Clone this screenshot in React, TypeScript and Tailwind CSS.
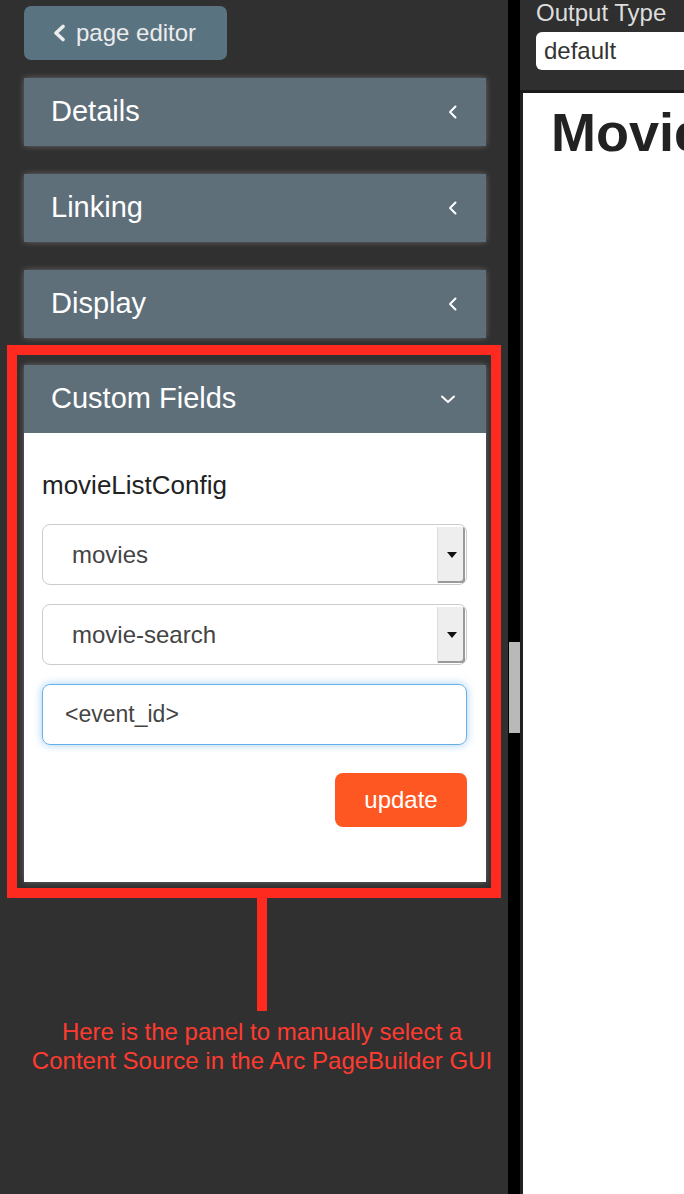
import { ReactNode } from 'react'

const font = { fontFamily: '"Liberation Sans", Arial, sans-serif' }

function Chevron({ dir }: { dir: 'left' | 'down' }) {
  return (
    <svg width="18" height="18" viewBox="0 0 18 18" fill="none" stroke="white" strokeWidth="2" strokeLinecap="round" strokeLinejoin="round">
      {dir === 'left' ? <path d="M11.5 3.5 L6 9 L11.5 14.5" /> : <path d="M3 6.5 L9 12 L15 6.5" />}
    </svg>
  )
}

function Header({ title, open }: { title: string; open?: boolean }) {
  return (
    <div className="h-[68px] bg-[#5e6f7a] flex items-center justify-between pl-[27px] pr-[24px]">
      <span className="text-[29px] text-white">{title}</span>
      <span className={open ? 'mr-[5px]' : ''}>
        <Chevron dir={open ? 'down' : 'left'} />
      </span>
    </div>
  )
}

function Section({ title }: { title: string }) {
  return (
    <div className="ml-[24px] w-[462px] shadow-[0_0_6px_rgba(255,255,255,0.28)]">
      <Header title={title} />
    </div>
  )
}

function FakeSelect({ children }: { children: ReactNode }) {
  return (
    <div className="h-[61px] rounded-[8px] border border-[#cccccc] bg-white flex items-stretch">
      <div className="flex-1 flex items-center pl-[29px] text-[24px] text-[#444]">{children}</div>
      <div className="w-[28px] mt-[2px] mb-[1px] mr-[1px] bg-[#eeeeee] border-l border-[#dddddd] shadow-[inset_-2px_-2px_0_#9a9a9a] rounded-r-[3px] flex items-center justify-center">
        <svg width="10" height="6" viewBox="0 0 10 6">
          <path d="M0 0 H10 L5 6 Z" fill="#111" />
        </svg>
      </div>
    </div>
  )
}

export default function App() {
  return (
    <div className="w-[684px] h-[1194px] flex overflow-hidden" style={font}>
      {/* sidebar */}
      <div className="w-[508px] shrink-0 bg-[#303030] flex flex-col">
        <div className="pt-[6px] pl-[24px]">
          <button className="w-[203px] h-[54px] rounded-[7px] bg-[#5a7381] flex items-center pl-[28px] gap-[9px] text-[24px] text-[#ececec]">
            <svg width="15" height="18" viewBox="0 0 15 18" fill="none" stroke="#ececec" strokeWidth="3.6" strokeLinecap="round" strokeLinejoin="round">
              <path d="M11 2.5 L4 9 L11 15.5" />
            </svg>
            page editor
          </button>
        </div>

        <div className="mt-[18px] flex flex-col gap-[28px]">
          <Section title="Details" />
          <Section title="Linking" />
          <Section title="Display" />
        </div>

        <div className="mt-[7px] ml-[7px] w-[494px] border-[10px] border-[#ff2a1f] pl-[7px] pr-[5px] pt-[10px] pb-[6px]">
          <div className="shadow-[0_0_6px_rgba(255,255,255,0.28)]">
            <Header title="Custom Fields" open />
            <div className="bg-white pt-[37px] pl-[18px] pr-[19px] pb-[55px]">
              <div className="text-[26px] leading-[30px] text-[#222]">movieListConfig</div>
              <div className="mt-[24px] flex flex-col gap-[19px]">
                <FakeSelect>movies</FakeSelect>
                <FakeSelect>movie-search</FakeSelect>
                <div className="h-[61px] rounded-[8px] border border-[#66afe9] shadow-[0_0_8px_rgba(102,175,233,0.6)] flex items-center pl-[22px] text-[23px] text-[#444]">
                  &lt;event_id&gt;
                </div>
              </div>
              <div className="mt-[28px] flex justify-end">
                <button className="w-[132px] h-[54px] rounded-[8px] bg-[#ff5722] text-white text-[24px]">update</button>
              </div>
            </div>
          </div>
        </div>

        <div className="ml-[257px] w-[10px] h-[113px] bg-[#ff2a1f]" />
        <div className="mt-[6px] pl-[16px] text-center text-[24px] leading-[29px] text-[#ff3b30]">
          Here is the panel to manually select a
          <br />
          Content Source in the Arc PageBuilder GUI
        </div>
      </div>

      {/* scrollbar */}
      <div className="w-[12px] shrink-0 bg-black pl-[1px] pt-[642px]">
        <div className="h-[91px] bg-[#b9b9b9]" />
      </div>

      {/* preview pane */}
      <div className="flex-1 flex flex-col min-w-0 overflow-hidden">
        <div className="h-[93px] shrink-0 bg-[#2f2f2f] border-b-[3px] border-[#1b1b1b] pl-[16px]">
          <div className="text-[24px] leading-[26px] text-[#dddddd] whitespace-nowrap">Output Type</div>
          <div className="mt-[6px] w-[200px] h-[38px] rounded-[6px] bg-white flex items-center pl-[8px] text-[24px] text-[#333]">default</div>
        </div>
        <div className="flex-1 bg-white border-l-[3px] border-[#222] pl-[28px] pt-[10px]">
          <h1 className="text-[54px] leading-[58px] font-bold text-[#222] whitespace-nowrap">Movies</h1>
        </div>
      </div>
    </div>
  )
}
